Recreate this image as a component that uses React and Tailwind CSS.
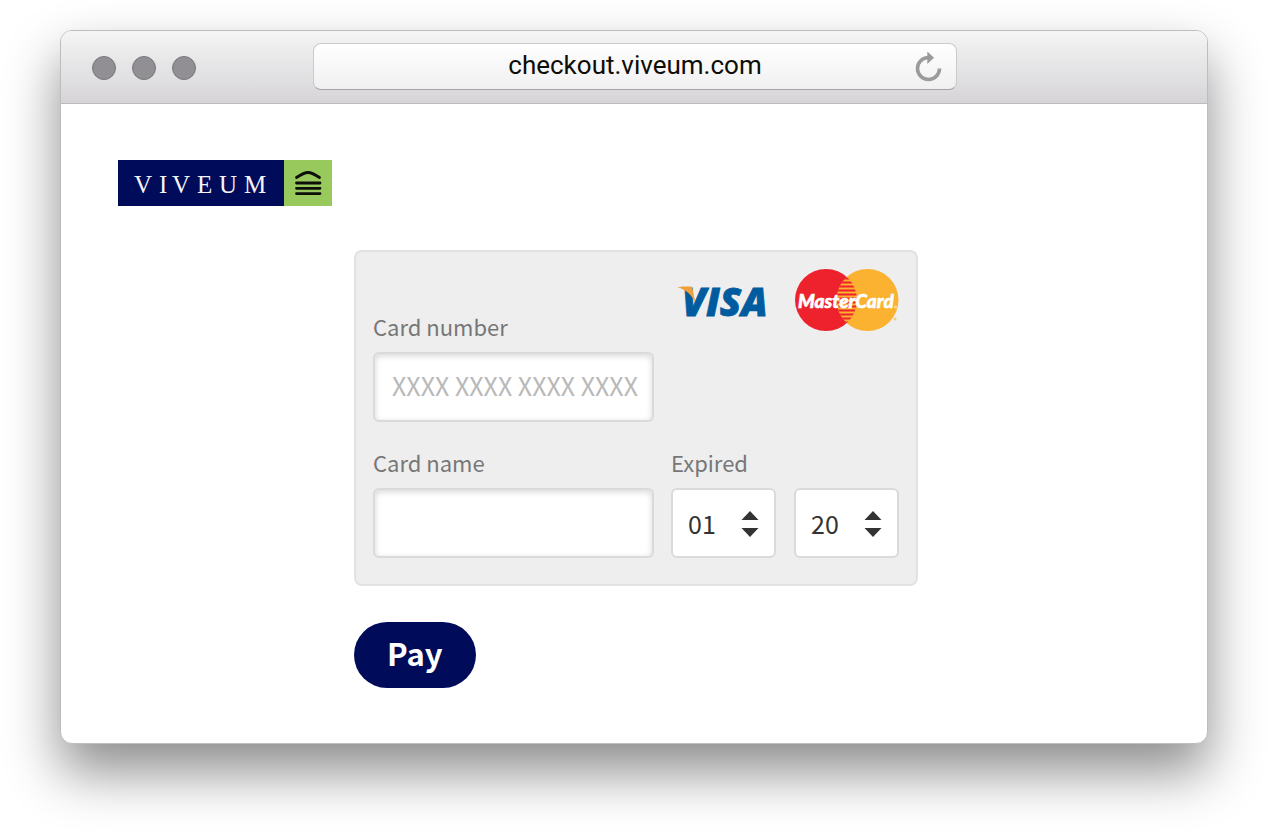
function ReloadIcon() {
  return (
    <svg viewBox="0 0 28 32" className="h-8 w-7" aria-hidden="true">
      <path d="M24.5 17.500A11 11 0 1 1 13.5 6.500" fill="none" stroke="#9b9b9b" strokeWidth="3.6" />
      <path d="M12.3 0.500L19 6.700L12.3 13Z" fill="#9b9b9b" />
    </svg>
  );
}

function ViveumLogo() {
  return (
    <svg viewBox="0 0 214 46" className="h-[46px] w-[214px]" role="img" aria-label="Viveum">
      <rect width="166" height="46" fill="#000b59" />
      <rect x="166" width="48" height="46" fill="#98c95c" />
      <text
        x="16 41 54 79 101 126"
        y="33"
        fill="#f4f4f8"
        fontSize="25"
        fontFamily="'Liberation Serif', serif"
      >
        VIVEUM
      </text>
      <g fill="none" stroke="#0b0f08" strokeWidth="2.8" strokeLinecap="round">
        <path d="M178.500 17.500C183 14.500 186.500 12.500 190 12.500S197 14.500 201.500 17.500" />
        <path d="M178.500 23H202M178.500 28.300H202M178.500 33.600H202" />
      </g>
    </svg>
  );
}

function VisaLogo() {
  return (
    <svg viewBox="0 0 96 34" className="h-[34px] w-24 overflow-visible" role="img" aria-label="Visa">
      <text
        x="5"
        y="31"
        fill="#005c9f"
        stroke="#005c9f"
        strokeWidth="0.8"
        fontSize="39"
        fontWeight="800"
        fontStyle="italic"
        fontFamily="'Open Sans', 'Noto Sans', sans-serif"
      >
        VISA
      </text>
      <path d="M4 1.500H14.500L18 17C14 9 9 5 4 3Z" fill="#f0a038" />
      <path d="M0 2H13C15 2 15.300 3 15.600 4.500L18 17C14.500 8.500 8 4.500 0 2Z" fill="#f0a038" />
    </svg>
  );
}

function MasterCardLogo() {
  return (
    <svg viewBox="0 0 104 62" className="h-[62px] w-[104px]" role="img" aria-label="MasterCard">
      <defs>
        <clipPath id="mc-overlap">
          <circle cx="31" cy="31" r="31" />
        </clipPath>
        <clipPath id="mc-right">
          <circle cx="72.500" cy="31" r="31" />
        </clipPath>
      </defs>
      <circle cx="31" cy="31" r="31" fill="#ed222d" />
      <circle cx="72.500" cy="31" r="31" fill="#fbb231" />
      <g clipPath="url(#mc-overlap)">
        <g clipPath="url(#mc-right)">
          <path
            d="M40 9.500H64M40 13.500H64M40 17.500H64M40 21.500H64M40 25.500H64M40 29.500H64M40 33.500H64M40 37.500H64M40 41.500H64M40 45.500H64M40 49.500H64M40 53.500H64"
            stroke="#ed222d"
            strokeWidth="2.200"
          />
        </g>
      </g>
      <text
        x="3"
        y="39"
        fill="#ffffff"
        stroke="#ffffff"
        strokeWidth="0.6"
        fontSize="19"
        fontWeight="900"
        fontStyle="italic"
        fontFamily="Lato, 'Noto Sans', sans-serif"
      >
        MasterCard
      </text>
      <circle cx="100.500" cy="38" r="1" fill="none" stroke="#fff" strokeWidth=".6" />
      <circle cx="100" cy="50" r="1" fill="none" stroke="#fbb231" strokeWidth=".8" />
    </svg>
  );
}

function Field({ id, label, placeholder }) {
  return (
    <div className="flex min-w-0 flex-col gap-3.5">
      <label htmlFor={id} className="text-[22px] leading-6 text-[#777777]">
        {label}
      </label>
      <input
        id={id}
        type="text"
        placeholder={placeholder}
        className="h-[70px] w-full rounded-md border-2 border-[#dadada] bg-white pr-2 pb-1 pl-[17px] text-[25px] text-[#333333] shadow-[inset_0_2px_6px_rgba(0,0,0,0.16)] placeholder:text-[#b9b9b9] focus:outline-none"
      />
    </div>
  );
}

function Picker({ id, label, options }) {
  return (
    <div className="grid min-w-0 items-center">
      <select
        id={id}
        aria-label={label}
        className="col-start-1 row-start-1 h-[70px] w-full appearance-none rounded-md border-2 border-[#dadada] bg-white px-[15px] pt-0.5 text-[25px] text-[#333333] focus:outline-none"
      >
        {options.map((option) => (
          <option key={option}>{option}</option>
        ))}
      </select>
      <svg
        viewBox="0 0 18 28"
        className="pointer-events-none col-start-1 row-start-1 mr-[17px] h-7 w-[18px] justify-self-end"
        aria-hidden="true"
      >
        <path d="M9 2L17.500 11H.5ZM9 28L17.500 19H.5Z" fill="#333333" />
      </svg>
    </div>
  );
}

export default function App() {
  return (
    <div className="overflow-hidden bg-white px-[60px] pt-[30px] pb-[90px] font-['Noto_Sans_CJK_SC','Noto_Sans',sans-serif]">
      <div className="overflow-hidden rounded-xl border border-[#bdbdbd] bg-white shadow-[0_28px_54px_rgba(0,0,0,0.45)]">
        <header className="grid grid-cols-[1fr_minmax(0,644px)_1fr] items-center border-b border-[#bdbbbe] bg-linear-to-b from-[#f5f5f5] to-[#d6d4d7] pt-3 pb-[13px] pl-0.5">
          <div className="flex gap-4 pt-0.5 pl-[29px]">
            <span className="size-6 rounded-full border border-[#77767a] bg-[#918f94]" />
            <span className="size-6 rounded-full border border-[#77767a] bg-[#918f94]" />
            <span className="size-6 rounded-full border border-[#77767a] bg-[#918f94]" />
          </div>
          <div className="grid h-[47px] grid-cols-[1fr_auto_1fr] items-center rounded-lg border border-[#cccacd] border-b-[#a5a3a7] bg-linear-to-b from-white to-[#f0f0f0] px-[13px]">
            <span className="col-start-2 pb-1 font-['Roboto',sans-serif] text-[26px] leading-8 text-[#0d0d05]">
              checkout.viveum.com
            </span>
            <button type="button" aria-label="Reload" className="justify-self-end">
              <ReloadIcon />
            </button>
          </div>
        </header>

        <main className="pt-14 pr-[53px] pb-[55px] pl-[57px]">
          <a href="#" className="inline-block align-top">
            <ViveumLogo />
          </a>
          <form className="mx-auto mt-11 max-w-[564px]">
            <div className="grid grid-cols-[281fr_228fr] gap-x-[17px] gap-y-7 rounded-lg border-2 border-[#e2e2e2] bg-[#eeeeee] px-[17px] pt-[17px] pb-[26px]">
              <div className="pt-[45px]">
                <Field id="card-number" label="Card number" placeholder="XXXX XXXX XXXX XXXX" />
              </div>
              <div className="flex items-start justify-between pl-1.5">
                <div className="pt-4">
                  <VisaLogo />
                </div>
                <MasterCardLogo />
              </div>
              <Field id="card-name" label="Card name" />
              <div className="flex min-w-0 flex-col gap-3.5">
                <label htmlFor="expiry-month" className="text-[22px] leading-6 text-[#777777]">
                  Expired
                </label>
                <div className="grid grid-cols-2 gap-[18px]">
                  <Picker id="expiry-month" label="Expired month" options={["01", "02", "03", "04", "05", "06", "07", "08", "09", "10", "11", "12"]} />
                  <Picker id="expiry-year" label="Expired year" options={["20", "21", "22", "23", "24", "25"]} />
                </div>
              </div>
            </div>
            <button
              type="button"
              className="mt-9 h-[66px] rounded-full bg-[#000b59] px-[33px] pb-1.5 text-[31px] leading-none font-bold text-white"
            >
              Pay
            </button>
          </form>
        </main>
      </div>
    </div>
  );
}
